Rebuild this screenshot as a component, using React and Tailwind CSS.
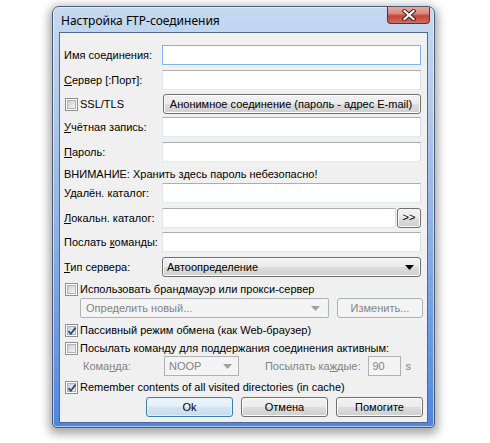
import clsx from 'clsx';

const FONT = { fontFamily: '"Liberation Sans", Arial, sans-serif' };

function Input({ className, focused, disabled, children }) {
  return (
    <div
      className={clsx(
        'h-[20px] border',
        disabled ? 'bg-[#f4f4f4] border-[#adb2b5]' : 'bg-white',
        !disabled && (focused ? 'border-[#7eb4ea]' : 'border-[#abadb3] border-b-[#e3e9ef] border-l-[#e2e3ea] border-r-[#dbdfe6]'),
        className
      )}
    >
      {children}
    </div>
  );
}

function Button({ children, className, primary, disabled }) {
  return (
    <div
      className={clsx(
        'flex items-center justify-center rounded-[3px] border',
        disabled
          ? 'border-[#adb2b5] bg-[#f4f4f4] text-[#838383]'
          : primary
          ? 'border-[#3c7fb1] bg-[linear-gradient(#edf5fb_0%,#e3eef7_50%,#d3e4f1_50%,#c6dbeb_100%)] shadow-[inset_0_0_0_1px_#dff2fd]'
          : 'border-[#707070] bg-[linear-gradient(#f2f2f2_0%,#ebebeb_50%,#dddddd_50%,#cfcfcf_100%)] shadow-[inset_0_0_0_1px_#fcfcfc]',
        className
      )}
    >
      {children}
    </div>
  );
}

function Arrow({ gray }) {
  return (
    <svg width="9" height="5" viewBox="0 0 9 5">
      <path d="M0 0h9L4.5 5z" fill={gray ? '#a0a0a0' : '#000'} />
    </svg>
  );
}

function Checkbox({ checked }) {
  return (
    <div className="relative h-[13px] w-[13px] shrink-0 border border-[#8e8f8f] bg-white p-[1px]">
      <div className="h-full w-full border border-[#aeb3b9] bg-[linear-gradient(135deg,#cbcfd5,#f6f6f6)]" />
      {checked && (
        <svg className="absolute left-[1px] top-[1px]" width="10" height="10" viewBox="0 0 10 10">
          <path d="M1.5 5.2l2.3 2.6L8.6 1.6" fill="none" stroke="#2b4a89" strokeWidth="1.8" />
        </svg>
      )}
    </div>
  );
}

function Row({ label, className, children }) {
  return (
    <div className={clsx('flex h-[20px] items-center', className)}>
      <div className="w-[102px] shrink-0 pl-[4px]">{label}</div>
      <div className="flex flex-1 items-center">{children}</div>
    </div>
  );
}

export default function App() {
  return (
    <div className="h-[443px] w-[490px] overflow-hidden bg-white text-[11px] text-black" style={FONT}>
      <div className="ml-[52px] mt-[6px] flex h-[422px] w-[383px] flex-col rounded-t-[7px] rounded-b-[4px] border border-[#4a5c7a] bg-[linear-gradient(180deg,#c6d9f0_0%,#b3cbea_22%,#93b4e6_50%,#6a98e2_80%,#4f86e0_100%)] px-[6px] pb-[4px] shadow-[0px_3px_10px_3px_rgba(0,0,0,0.35),inset_0_0_0_1px_rgba(255,255,255,0.55)]">
        {/* Title bar */}
        <div className="flex h-[25px] shrink-0 items-start justify-between">
          <div className="pl-[2px] pt-[7px] text-[12px] leading-[14px]" style={{ fontFamily: '"Noto Sans", sans-serif' }}>
            Настройка FTP-соединения
          </div>
          <div className="-mr-[2px] flex h-[17px] w-[43px] items-center justify-center rounded-b-[4px] border border-t-0 border-[#6b2c25] bg-[linear-gradient(#e9a99f_0%,#d98a80_40%,#c3463a_55%,#cf6a5f_100%)]">
            <svg width="14" height="12" viewBox="0 0 14 12">
              <path d="M2.5 2l9 8M11.5 2l-9 8" stroke="#3b1a16" strokeWidth="4" strokeLinecap="square" />
              <path d="M2.5 2l9 8M11.5 2l-9 8" stroke="#fff" strokeWidth="2.2" strokeLinecap="square" />
            </svg>
          </div>
        </div>

        {/* Client area */}
        <div className="flex flex-1 flex-col border border-[#52688c] bg-[#f0f0f0] pr-[6px]">
          <Row label="Имя соединения:" className="mt-[12px]">
            <Input focused className="flex-1" />
          </Row>
          <Row label={<><u>С</u>ервер [:Порт]:</>} className="mt-[5px]">
            <Input className="flex-1" />
          </Row>
          <div className="mt-[4px] flex h-[20px] items-center">
            <div className="flex w-[103px] shrink-0 items-center gap-[2px] pl-[5px]">
              <Checkbox />
              <span>SSL/TLS</span>
            </div>
            <Button className="h-[20px] flex-1 pr-[2px]">Анонимное соединение (пароль - адрес E-mail)</Button>
          </div>
          <Row label={<><u>У</u>чётная запись:</>} className="mt-[3px]">
            <Input className="flex-1" />
          </Row>
          <Row label={<><u>П</u>ароль:</>} className="mt-[5px]">
            <Input className="flex-1" />
          </Row>
          <div className="mt-[4px] flex h-[16px] items-center pl-[4px]">ВНИМАНИЕ: Хранить здесь пароль небезопасно!</div>
          <Row label="Удалён. каталог:" className="mt-[1px]">
            <Input className="flex-1" />
          </Row>
          <Row label={<><u>Л</u>окальн. каталог:</>} className="mt-[5px]">
            <Input className="flex-1" />
            <Button className="ml-[1px] h-[20px] w-[24px] pb-[1px]">&gt;&gt;</Button>
          </Row>
          <Row label={<>Послать <u>к</u>оманды:</>} className="mt-[4px]">
            <Input className="flex-1" />
          </Row>
          <Row label={<><u>Т</u>ип сервера:</>} className="mt-[5px]">
            <Button className="h-[20px] flex-1 justify-between! pl-[4px] pr-[6px]">
              <span>Автоопределение</span>
              <Arrow />
            </Button>
          </Row>
          <div className="mt-[5px] flex h-[14px] items-center gap-[2px] pl-[5px]">
            <Checkbox />
            <span>Использовать брандмауэр или прокси-сервер</span>
          </div>
          <div className="mt-[2px] flex h-[20px] items-center pl-[20px]">
            <div className="flex h-[20px] w-[249px] items-center justify-between rounded-[2px] border border-[#adb2b5] bg-[#f4f4f4] pl-[5px] pr-[8px] text-[#838383]">
              <span>Определить новый...</span>
              <Arrow gray />
            </div>
            <Button disabled className="ml-[8px] h-[20px] flex-1 -mr-[2px]">Изменить...</Button>
          </div>
          <div className="mt-[5px] flex h-[14px] items-center gap-[2px] pl-[5px]">
            <Checkbox checked />
            <span>Пассивный режим обмена (как Web-браузер)</span>
          </div>
          <div className="mt-[4px] flex h-[14px] items-center gap-[2px] pl-[5px]">
            <Checkbox />
            <span>Посылать команду для поддержания соединения активным:</span>
          </div>
          <div className="mt-[1px] flex h-[20px] items-center text-[#838383]">
            <div className="w-[104px] shrink-0 pl-[23px]">Кома<u>н</u>да:</div>
            <div className="flex h-[20px] w-[75px] items-center justify-between border border-[#adb2b5] bg-[#f4f4f4] pl-[4px] pr-[6px]">
              <span>NOOP</span>
              <Arrow gray />
            </div>
            <div className="flex-1 pr-[7px] text-right">Посылать ка<u>ж</u>дые:</div>
            <Input disabled className="flex w-[33px] items-center pl-[4px]">90</Input>
            <span className="ml-[5px] mr-[10px]">s</span>
          </div>
          <div className="mt-[4px] flex h-[14px] items-center gap-[2px] pl-[5px]">
            <Checkbox checked />
            <span>Remember contents of all visited directories (in cache)</span>
          </div>
          <div className="-mr-[2px] mt-[3px] flex h-[20px] justify-end gap-[8px]">
            <Button primary className="w-[87px]">Ok</Button>
            <Button className="w-[87px]">Отмена</Button>
            <Button className="w-[87px]">Помогите</Button>
          </div>
        </div>
      </div>
    </div>
  );
}
